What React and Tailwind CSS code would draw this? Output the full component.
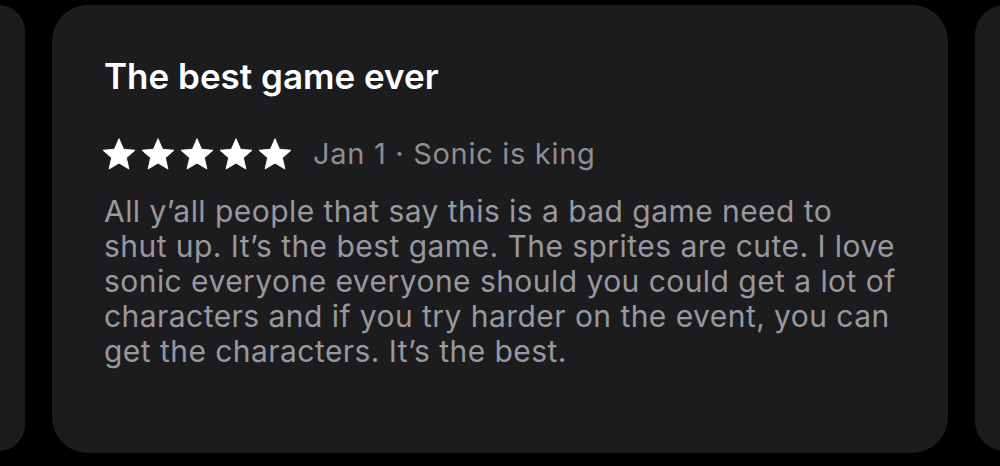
const Star = () => (
  <svg viewBox="0 0 24 24" className="h-[36px] w-[36px]" fill="white" stroke="white" strokeWidth="0.6" strokeLinejoin="round">
    <path d="M12 1.8l3.05 7.03 7.62.68-5.77 5.04 1.72 7.46L12 18.07l-6.62 3.94 1.72-7.46-5.77-5.04 7.62-.68z" />
  </svg>
)

export default function App() {
  return (
    <div className="flex h-[466px] w-[1000px] gap-[27px] overflow-hidden bg-black pt-[5px] font-['Inter',sans-serif]">
      <div className="-ml-[27px] h-[446px] w-[52px] shrink-0 rounded-[36px] bg-[#1c1c1e]" />
      <div className="flex h-[448px] w-[896px] shrink-0 flex-col rounded-[36px] bg-[#1c1c1e] px-[52px] pt-[49px]">
        <h1 className="text-[35px] font-semibold leading-[44px] tracking-[0px] text-white">The best game ever</h1>
        <div className="-ml-[3px] mt-[38px] flex items-center">
          <div className="flex gap-[3px]">
            <Star />
            <Star />
            <Star />
            <Star />
            <Star />
          </div>
          <span className="ml-[20px] text-[29px] leading-[36px] tracking-[0.7px] text-[#8e8e93]">Jan 1 · Sonic is king</span>
        </div>
        <p className="mt-[22px] text-[30px] leading-[35px] tracking-[0.45px] text-[#98989e]">
          All y’all people that say this is a bad game need to shut up. It’s the best game. The sprites are cute. I love sonic everyone everyone should you could get a lot of characters and if you try harder on the event, you can get the characters. It’s the best.
        </p>
      </div>
      <div className="h-[446px] w-[60px] shrink-0 rounded-[36px] bg-[#1c1c1e]" />
    </div>
  )
}
